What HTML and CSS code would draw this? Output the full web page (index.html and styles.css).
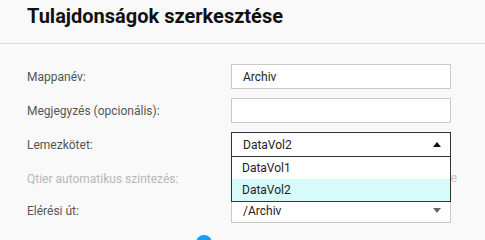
FILE: index.html
```html
<!DOCTYPE html>
<html lang="hu">
<head>
    <meta charset="utf-8">
    <title>Tulajdonságok szerkesztése</title>
    <link rel="stylesheet" href="styles.css">
</head>
<body>

<div class="header">
    <h1 class="title">Tulajdonságok szerkesztése</h1>
</div>

<div class="form">
    <div class="row">
        <label class="label">Mappanév:</label>
        <div class="field"><input class="input" type="text" value="Archiv"></div>
    </div>
    <div class="row">
        <label class="label">Megjegyzés (opcionális):</label>
        <div class="field"><input class="input" type="text" value=""></div>
    </div>
    <div class="row">
        <label class="label">Lemezkötet:</label>
        <div class="field">
            <div class="select focused">
                <span>DataVol2</span>
                <span class="arrow up"></span>
            </div>
            <ul class="dropdown">
                <li class="option">DataVol1</li>
                <li class="option selected">DataVol2</li>
            </ul>
        </div>
    </div>
    <div class="row short">
        <label class="label disabled">Qtier automatikus szintezés:</label>
        <div class="field"><span class="hint">Automatikus rétegzés engedélyezése</span></div>
    </div>
    <div class="row">
        <label class="label">Elérési út:</label>
        <div class="field">
            <div class="select">
                <span>/Archiv</span>
                <span class="arrow down"></span>
            </div>
        </div>
    </div>
    <div class="footer">
        <span class="spinner"></span>
    </div>
</div>

</body>
</html>
```

FILE: styles.css
```css
body {
    margin: 0;
    background: #f9f9f9;
    font-family: Roboto, "Noto Sans", Arial, sans-serif;
    overflow: hidden;
}

.header {
    height: 44px;
    padding: 4px 27px 0;
    box-sizing: border-box;
    border-bottom: 1px solid #dedede;
}

.title {
    margin: 0;
    font-size: 20px;
    line-height: 24px;
    font-weight: bold;
    color: #111;
}

.form {
    padding: 20px 0 0 27px;
}

.row {
    display: flex;
    align-items: center;
    height: 25px;
    margin-bottom: 9px;
}

.row.short {
    margin-bottom: 7px;
}

.label {
    width: 204px;
    font-size: 12px;
    color: #555;
}

.label.disabled {
    color: #b8b8b8;
}

.field {
    position: relative;
    width: 226px;
    height: 25px;
}

.input, .select {
    width: 220px;
    height: 25px;
    box-sizing: border-box;
    border: 1px solid #c9c9c9;
    background: #fff;
    padding: 0 11px;
    font-family: inherit;
    font-size: 12px;
    color: #222;
    outline: none;
}

.select {
    display: flex;
    align-items: center;
    justify-content: space-between;
    padding-right: 9px;
}

.select.focused {
    border-color: #333;
}

.arrow {
    width: 0;
    height: 0;
    border-left: 4px solid transparent;
    border-right: 4px solid transparent;
}

.arrow.up {
    border-bottom: 5px solid #111;
}

.arrow.down {
    border-top: 5px solid #666;
}

.dropdown {
    position: absolute;
    top: 24px;
    left: 0;
    z-index: 2;
    width: 220px;
    box-sizing: border-box;
    margin: 0;
    padding: 0;
    list-style: none;
    border: 1px solid #333;
    background: #fff;
}

.option {
    height: 22px;
    line-height: 22px;
    padding-left: 10px;
    font-size: 12px;
    color: #222;
}

.option.selected {
    background: #d7fbfb;
}

.hint {
    display: block;
    text-align: right;
    line-height: 25px;
    font-size: 12px;
    color: #c4c4c4;
}

.footer {
    padding: 3px 0 0 169px;
}

.spinner {
    display: block;
    width: 16px;
    height: 16px;
    border-radius: 50%;
    background: #1a9cf2;
}
```
